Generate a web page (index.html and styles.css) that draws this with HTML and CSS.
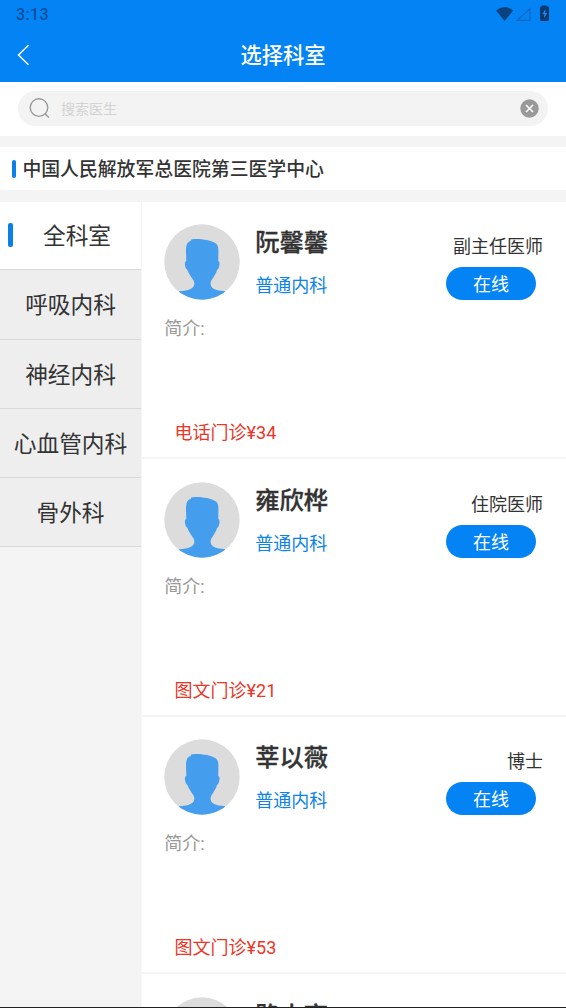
FILE: index.html
```html
<!DOCTYPE html>
<html lang="zh-CN">
<head>
<meta charset="utf-8">
<title>选择科室</title>
<link rel="stylesheet" href="styles.css">
</head>
<body>
<svg class="defs" aria-hidden="true">
  <symbol id="avatar" viewBox="0 0 76 76">
    <clipPath id="round"><circle cx="38" cy="38" r="37.7"/></clipPath>
    <circle cx="38" cy="38" r="37.7" fill="#dcdcdc"/>
    <path clip-path="url(#round)" fill="#459eed" d="M27 17 Q26 15.4 28.5 15.2 C37 14.7 47 16.2 52 19.5 Q54.5 21.5 54.4 27 L54.3 37 Q56 37.5 55.4 41 Q55 45 53 46 C51.5 52 47 55.5 46.6 59 C46.4 65 51 66.6 61 67.2 V78 H15 V67.2 C25 66.6 30.4 65 30.4 59 C30 55.5 25.5 52 23.5 46 Q21.5 45 21 41 Q20.5 37.5 22.3 37 L22 28 Q21.8 20.5 24 18.5 Q25 17.3 27 17Z"/>
  </symbol>
</svg>
<div class="app">
  <header class="header">
    <div class="status">
      <span class="time">3:13</span>
      <svg class="status-icons" width="56" height="20" viewBox="0 0 56 20">
        <path fill="#08427f" d="M0 7.5 Q8.5 .5 17.2 7.5 L8.6 18Z"/>
        <path fill="none" stroke="#0868bf" stroke-width="1.2" d="M34 5.5 V17.4 H21.5Z"/>
        <path fill="#083a72" d="M46 3.2 V2.5 H50.5 V3.2 H51.5 Q53 3.2 53 4.7 V16.5 Q53 18 51.5 18 H45.5 Q44 18 44 16.5 V4.7 Q44 3.2 45.5 3.2Z"/>
        <path fill="#2288e8" d="M49.5 6 L46.3 11.3 H48.2 V15.4 L51 10 H49.3Z"/>
      </svg>
    </div>
    <div class="navbar">
      <svg class="back" width="14" height="22" viewBox="0 0 14 22"><path fill="none" stroke="#fff" stroke-width="1.5" d="M11.5 1.2 L1.5 11 L11.5 20.8"/></svg>
      <h1 class="title">选择科室</h1>
    </div>
  </header>
  <div class="search">
    <div class="search-box">
      <svg width="22" height="22" viewBox="0 0 22 22" fill="none" stroke="#999" stroke-width="1.4"><circle cx="10" cy="9.6" r="8.8"/><path d="M16.2 16 L20 19.6"/></svg>
      <span class="placeholder">搜索医生</span>
      <svg class="clear" width="19" height="19" viewBox="0 0 19 19"><circle cx="9.5" cy="9.5" r="9.2" fill="#999"/><path d="M6 6 L13 13 M13 6 L6 13" stroke="#fff" stroke-width="1.6"/></svg>
    </div>
  </div>
  <div class="hospital"><span class="mark"></span><h2 class="hospital-name">中国人民解放军总医院第三医学中心</h2></div>
  <main class="content">
    <nav class="tabs">
      <div class="tab active"><span class="tab-mark"></span><span class="tab-label">全科室</span></div>
      <div class="tab">呼吸内科</div>
      <div class="tab">神经内科</div>
      <div class="tab">心血管内科</div>
      <div class="tab">骨外科</div>
    </nav>
    <section class="doctors">
      <article class="card">
        <div class="top">
          <svg class="avatar"><use href="#avatar"/></svg>
          <div class="who"><h3 class="name">阮馨馨</h3><div class="dept">普通内科</div></div>
          <div class="side"><div class="rank">副主任医师</div><div class="online">在线</div></div>
        </div>
        <div class="intro">简介:</div>
        <div class="price">电话门诊¥34</div>
      </article>
      <article class="card">
        <div class="top">
          <svg class="avatar"><use href="#avatar"/></svg>
          <div class="who"><h3 class="name">雍欣桦</h3><div class="dept">普通内科</div></div>
          <div class="side"><div class="rank">住院医师</div><div class="online">在线</div></div>
        </div>
        <div class="intro">简介:</div>
        <div class="price">图文门诊¥21</div>
      </article>
      <article class="card">
        <div class="top">
          <svg class="avatar"><use href="#avatar"/></svg>
          <div class="who"><h3 class="name">莘以薇</h3><div class="dept">普通内科</div></div>
          <div class="side"><div class="rank">博士</div><div class="online">在线</div></div>
        </div>
        <div class="intro">简介:</div>
        <div class="price">图文门诊¥53</div>
      </article>
      <article class="card">
        <div class="top">
          <svg class="avatar"><use href="#avatar"/></svg>
          <div class="who"><h3 class="name">路小亮</h3></div>
        </div>
      </article>
    </section>
  </main>
</div>
</body>
</html>
```

FILE: styles.css
```css
* { box-sizing: border-box; }
body { margin: 0; font-family: Roboto, "Noto Sans CJK SC", sans-serif; color: #333; }
h1, h2, h3 { margin: 0; }
.defs { position: absolute; width: 0; height: 0; }
.app { height: 1008px; overflow: hidden; display: flex; flex-direction: column; background: #f4f4f4; border-bottom: 1px solid #202020; }
.header { flex: none; height: 82px; background: #0484f4; }
.status { height: 28px; padding: 3px 14px 0 16px; display: flex; justify-content: space-between; }
.time { font-size: 16px; line-height: 24px; letter-spacing: .4px; color: #08509c; font-weight: 500; }
.navbar { height: 54px; padding: 0 17px; display: grid; grid-template-columns: 14px 1fr 14px; align-items: center; }
.title { padding-top: 2px; text-align: center; color: #fff; font-size: 21.3px; line-height: 30px; font-weight: 500; }
.search { flex: none; height: 54px; padding: 9px 18px; background: #fff; }
.search-box { height: 35px; border-radius: 18px; background: #f3f3f3; padding: 0 9px 0 11px; display: flex; align-items: center; }
.placeholder { margin-left: 10px; font-size: 14px; line-height: 20px; color: #d2d2d2; }
.clear { margin-left: auto; }
.hospital { flex: none; height: 43px; margin: 11px 0 11.6px; padding-left: 12px; display: flex; align-items: center; gap: 6.4px; background: #fff; }
.mark { width: 4px; height: 18px; border-radius: 2px; background: #0b80e6; }
.hospital-name { padding-top: 2px; font-size: 18.85px; line-height: 28px; font-weight: 500; }
.content { flex: 1; min-height: 0; display: flex; overflow: hidden; }
.tabs { width: 141px; flex: none; }
.tab { height: 69.3px; padding-top: 4px; border-bottom: 1.5px solid #d9d9d9; background: #eee; display: flex; align-items: center; justify-content: center; font-size: 22.7px; line-height: 32px; }
.tab.active { height: 68.7px; padding-top: 0; background: #fff; justify-content: flex-start; padding-left: 8px; }
.tab-mark { width: 5px; height: 24px; border-radius: 2px; background: #0b80e6; }
.tab-label { margin-left: 30px; padding-top: 4px; }
.doctors { flex: 1; min-width: 0; background: #fff; border-left: 1px solid #f7f7f7; }
.card { height: 257.6px; padding: 22.6px 23px 0 22.2px; border-bottom: 2px solid #f5f5f5; }
.top { display: flex; height: 76px; }
.avatar { width: 76px; height: 76px; flex: none; }
.who { margin-left: 15px; }
.name { padding-top: 1px; font-size: 24.3px; line-height: 36px; font-weight: 500; -webkit-text-stroke: .3px #333; }
.dept { margin-top: 12px; font-size: 18px; line-height: 26px; color: #0b83e8; }
.side { margin-left: auto; padding-top: 10px; text-align: right; font-size: 18px; line-height: 26px; }
.online { width: 90px; height: 33px; margin: 7px 7px 0 auto; border-radius: 17px; background: #0484f4; color: #fff; text-align: center; line-height: 35px; }
.intro { margin-top: 16px; font-size: 18px; line-height: 26px; color: #999; }
.price { margin: 78px 0 0 10.4px; font-size: 18px; line-height: 26px; color: #eb3628; }
```
